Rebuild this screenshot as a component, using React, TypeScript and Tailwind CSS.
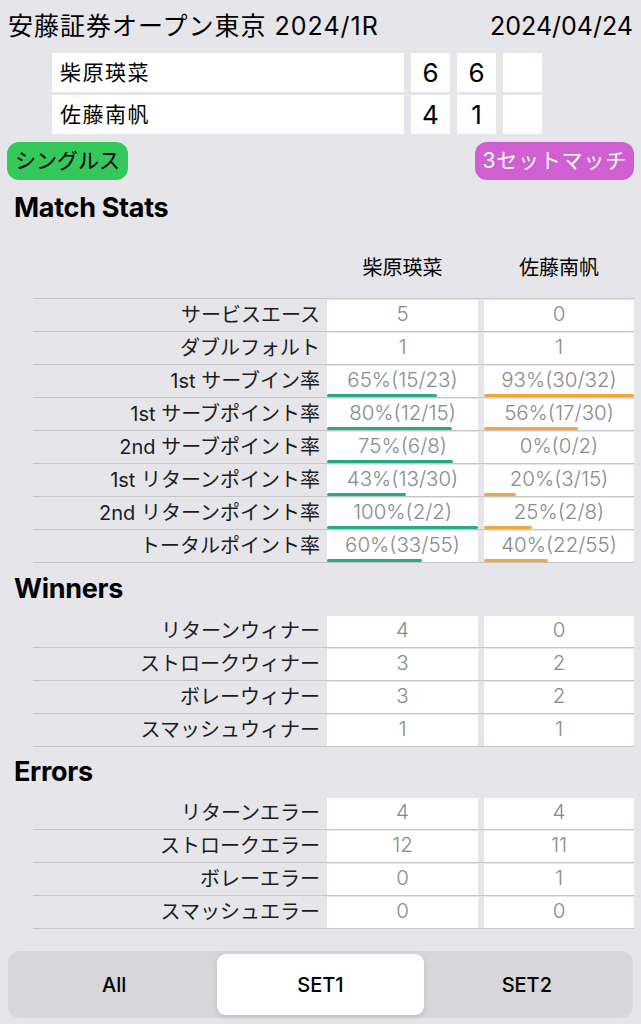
const FONT = "font-['Inter','Noto_Sans_CJK_JP',sans-serif]";

type Stat = { label: string; a: string; b: string; barA?: number; barB?: number };

const matchStats: Stat[] = [
  { label: "サービスエース", a: "5", b: "0" },
  { label: "ダブルフォルト", a: "1", b: "1" },
  { label: "1st サーブイン率", a: "65%(15/23)", b: "93%(30/32)", barA: 110, barB: 150 },
  { label: "1st サーブポイント率", a: "80%(12/15)", b: "56%(17/30)", barA: 125, barB: 94 },
  { label: "2nd サーブポイント率", a: "75%(6/8)", b: "0%(0/2)", barA: 126, barB: 0 },
  { label: "1st リターンポイント率", a: "43%(13/30)", b: "20%(3/15)", barA: 79, barB: 32 },
  { label: "2nd リターンポイント率", a: "100%(2/2)", b: "25%(2/8)", barA: 151, barB: 48 },
  { label: "トータルポイント率", a: "60%(33/55)", b: "40%(22/55)", barA: 95, barB: 64 },
];

const winners: Stat[] = [
  { label: "リターンウィナー", a: "4", b: "0" },
  { label: "ストロークウィナー", a: "3", b: "2" },
  { label: "ボレーウィナー", a: "3", b: "2" },
  { label: "スマッシュウィナー", a: "1", b: "1" },
];

const errors: Stat[] = [
  { label: "リターンエラー", a: "4", b: "4" },
  { label: "ストロークエラー", a: "12", b: "11" },
  { label: "ボレーエラー", a: "0", b: "1" },
  { label: "スマッシュエラー", a: "0", b: "0" },
];

function Cell({ value, bar, color, width }: { value: string; bar?: number; color: string; width: string }) {
  return (
    <div className={`${width} flex h-[31px] flex-col bg-white`}>
      <div className="flex flex-1 items-center justify-center pt-[2px] text-[20.5px] font-light leading-none text-[#8a8a8e]">
        {value}
      </div>
      <div className="h-[3px]">
        {bar ? <div className={`h-[3px] rounded-full ${color}`} style={{ width: bar }} /> : null}
      </div>
    </div>
  );
}

function StatRow({ s }: { s: Stat }) {
  return (
    <div className="flex h-[33px] items-center gap-[6px] border-b border-[#c6c6c8]">
      <div className="flex-1 pr-[1px] text-right text-[20px] leading-none text-[#1c1c1e]">{s.label}</div>
      <Cell value={s.a} bar={s.barA} color="bg-[#2aa88a]" width="w-[151px]" />
      <Cell value={s.b} bar={s.barB} color="bg-[#f5a641]" width="w-[150px]" />
    </div>
  );
}

function Heading({ children, className }: { children: string; className: string }) {
  return (
    <div className={`flex items-center px-[14px] text-[27px] font-bold tracking-[-0.3px] text-black ${className}`}>
      {children}
    </div>
  );
}

function ScoreRow({ name, s1, s2 }: { name: string; s1: string; s2: string }) {
  return (
    <div className="flex gap-[7px]">
      <div className="flex h-[39px] w-[352px] items-center bg-white px-[8px] text-[21px] tracking-[1.5px]">{name}</div>
      <div className="flex h-[39px] w-[39px] items-center justify-center bg-white text-[26px]">{s1}</div>
      <div className="flex h-[39px] w-[39px] items-center justify-center bg-white text-[26px]">{s2}</div>
      <div className="h-[39px] w-[39px] bg-white" />
    </div>
  );
}

export default function App() {
  return (
    <div className={`${FONT} flex min-h-[1024px] w-[641px] flex-col bg-[#e5e5ea] text-black`}>
      <header className="flex h-[53px] items-center justify-between px-[8px] text-[25px]">
        <span className="tracking-[1px]">安藤証券オープン東京 2024/1R</span>
        <span>2024/04/24</span>
      </header>

      <div className="ml-[52px] flex flex-col gap-[3px]">
        <ScoreRow name="柴原瑛菜" s1="6" s2="6" />
        <ScoreRow name="佐藤南帆" s1="4" s2="1" />
      </div>

      <div className="mt-[8px] flex items-center justify-between px-[7px]">
        <span className="flex h-[38px] items-center rounded-[12px] bg-[#34c759] px-[8px] text-[21px] text-black">
          シングルス
        </span>
        <span className="flex h-[38px] items-center rounded-[12px] bg-[#d060d2] px-[7px] text-[21px] tracking-[0.8px] text-white">
          3セットマッチ
        </span>
      </div>

      <Heading className="h-[57px]">Match Stats</Heading>

      <div className="ml-[33px] mr-[7px]">
        <div className="flex h-[62px] items-center gap-[6px] border-b border-[#c6c6c8] text-[20px]">
          <div className="flex-1" />
          <div className="w-[151px] text-center">柴原瑛菜</div>
          <div className="w-[150px] text-center">佐藤南帆</div>
        </div>
        {matchStats.map((s) => (
          <StatRow key={s.label} s={s} />
        ))}
      </div>

      <Heading className="h-[52px]">Winners</Heading>
      <div className="ml-[33px] mr-[7px]">
        {winners.map((s) => (
          <StatRow key={s.label} s={s} />
        ))}
      </div>

      <Heading className="h-[50px]">Errors</Heading>
      <div className="ml-[33px] mr-[7px]">
        {errors.map((s) => (
          <StatRow key={s.label} s={s} />
        ))}
      </div>

      <div className="mx-[8px] mt-[22px] grid h-[67px] grid-cols-3 rounded-[12px] bg-[#d6d6db] p-[3px] text-[20px] font-medium">
        <div className="flex items-center justify-center">All</div>
        <div className="flex items-center justify-center rounded-[9px] bg-white shadow-[0_2px_6px_rgba(0,0,0,0.12)]">
          SET1
        </div>
        <div className="flex items-center justify-center">SET2</div>
      </div>
    </div>
  );
}
